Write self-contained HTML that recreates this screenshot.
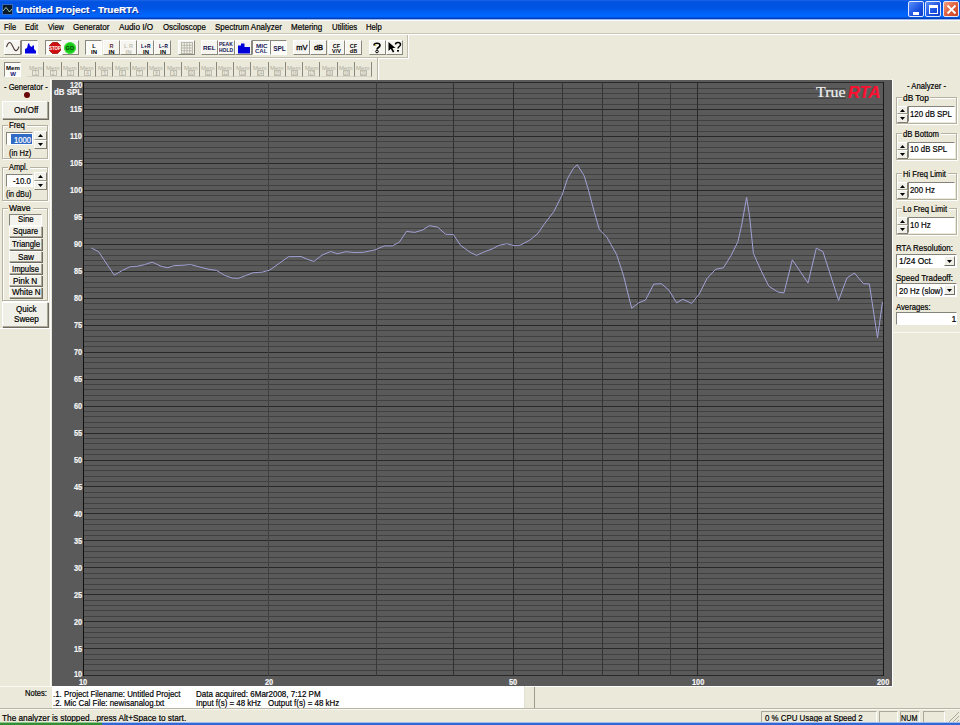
<!DOCTYPE html><html><head><meta charset="utf-8"><style>
*{margin:0;padding:0;box-sizing:border-box}
html,body{width:960px;height:725px;overflow:hidden;background:#ebe9da;font-family:"Liberation Sans",sans-serif;font-size:8.5px;color:#000}
.ab{position:absolute}
.t{position:absolute;white-space:nowrap;line-height:1;-webkit-text-stroke:0.2px currentColor}
.btn{position:absolute;background:#f1f0e8;border-top:1px solid #fff;border-left:1px solid #fff;border-right:1px solid #aca899;border-bottom:1px solid #aca899;box-shadow:1px 1px 0 #6f6d62}
.tb{position:absolute;background:#f6f5f0;border-top:1px solid #fff;border-left:1px solid #fff;border-right:1px solid #8a887c;border-bottom:1px solid #8a887c}
.tbp{position:absolute;background:#fbfbf8;border-top:1px solid #8a887c;border-left:1px solid #8a887c;border-right:1px solid #fff;border-bottom:1px solid #fff}
.grp{position:absolute;border:1px solid #b4b1a0;box-shadow:inset 1px 1px 0 #fff,1px 1px 0 #fff}
.sunk{position:absolute;background:#fff;border-top:1px solid #85837a;border-left:1px solid #85837a;border-right:1px solid #fff;border-bottom:1px solid #fff}

</style></head><body>
<div class="ab" style="left:0;top:0;width:960px;height:19px;background:linear-gradient(#1a64ea 0px,#0052e0 2px,#0054e4 8px,#0062f8 13px,#0066ff 16.5px,#0040b8 18.5px)"></div>
<div class="ab" style="left:2px;top:4px;width:11px;height:11px;background:#0a1a2a;border:1px solid #3a6ab8"></div>
<svg class="ab" style="left:2px;top:4px" width="11" height="11"><polyline points="1,7 4,3.5 7.5,8 10,5" fill="none" stroke="#a0c8a8" stroke-width="1"/></svg>
<div class="t" style="left:16.40px;top:5.00px;font-size:9.8px;font-weight:bold;color:#fff;transform:scaleX(1.0112);transform-origin:0 0;text-shadow:1px 1px 0 #0a2a90">Untitled Project - TrueRTA</div>
<div class="ab" style="left:908px;top:1px;width:16px;height:16px;border:1px solid #dfe8ff;border-radius:2px;background:linear-gradient(135deg,#5a8ef8,#1a50e0 60%,#1040c8)"><div class="ab" style="left:4px;top:10px;width:6px;height:3px;background:#fff"></div></div>
<div class="ab" style="left:925px;top:1px;width:16px;height:16px;border:1px solid #dfe8ff;border-radius:2px;background:linear-gradient(135deg,#5a8ef8,#1a50e0 60%,#1040c8)"><div class="ab" style="left:3px;top:3px;width:9px;height:9px;border:1px solid #fff;border-top-width:3px"></div></div>
<div class="ab" style="left:943px;top:1px;width:16px;height:16px;border:1px solid #dfe8ff;border-radius:2px;background:linear-gradient(135deg,#f0a080,#e06040 50%,#c84020)"><svg class="ab" style="left:2px;top:2px" width="11" height="11"><path d="M1.5 1.5L9.5 9.5M9.5 1.5L1.5 9.5" stroke="#fff" stroke-width="1.8"/></svg></div>
<div class="ab" style="left:0;top:19px;width:960px;height:1px;background:#9ab4ec"></div>
<div class="ab" style="left:0;top:20px;width:960px;height:1px;background:#fbfbff"></div>
<div class="t" style="left:4.20px;top:23.00px;font-size:8.8px;transform:scaleX(0.8498);transform-origin:0 0">File</div>
<div class="t" style="left:25.00px;top:23.00px;font-size:8.8px;transform:scaleX(0.8573);transform-origin:0 0">Edit</div>
<div class="t" style="left:48.00px;top:23.00px;font-size:8.8px;transform:scaleX(0.8459);transform-origin:0 0">View</div>
<div class="t" style="left:73.00px;top:23.00px;font-size:8.8px;transform:scaleX(0.9187);transform-origin:0 0">Generator</div>
<div class="t" style="left:118.75px;top:23.00px;font-size:8.8px;transform:scaleX(0.9336);transform-origin:0 0">Audio I/O</div>
<div class="t" style="left:162.80px;top:23.00px;font-size:8.8px;transform:scaleX(0.8929);transform-origin:0 0">Osciloscope</div>
<div class="t" style="left:214.60px;top:23.00px;font-size:8.8px;transform:scaleX(0.9058);transform-origin:0 0">Spectrum Analyzer</div>
<div class="t" style="left:291.40px;top:23.00px;font-size:8.8px;transform:scaleX(0.9142);transform-origin:0 0">Metering</div>
<div class="t" style="left:331.80px;top:23.00px;font-size:8.8px;transform:scaleX(0.8886);transform-origin:0 0">Utilities</div>
<div class="t" style="left:366.00px;top:23.00px;font-size:8.8px;transform:scaleX(0.8730);transform-origin:0 0">Help</div>
<div class="ab" style="left:0;top:33px;width:960px;height:1px;background:#c8c5b4"></div>
<div class="ab" style="left:0;top:34px;width:960px;height:1px;background:#fff"></div>
<div class="ab" style="left:0;top:57px;width:408px;height:1px;background:#c0bdac"></div>
<div class="ab" style="left:0;top:58px;width:409px;height:1px;background:#fff"></div>
<div class="tb" style="left:4px;top:40px;width:17px;height:15px;overflow:hidden"></div>
<svg class="ab" style="left:5px;top:41px" width="16" height="12"><path d="M1.5 6 C3 1, 5 0.5, 6.5 3 S9.5 10.5, 11.5 9.5 S13.5 6.5, 14 5.5" fill="none" stroke="#4a3a3a" stroke-width="1.1"/></svg>
<div class="tbp" style="left:21px;top:40px;width:17px;height:15px;overflow:hidden"></div>
<svg class="ab" style="left:24px;top:41px" width="13" height="13"><path d="M1 12.5 L1 8 L3 7 L4 3 L5 2 L6 5 L8 6 L9 4 L10 5 L10 8 L12 10 L12 12.5Z" fill="#0000e0"/></svg>
<div class="tbp" style="left:45px;top:40px;width:17px;height:15px;overflow:hidden"></div>
<svg class="ab" style="left:49px;top:42px" width="12" height="12"><path d="M3.5 0.5 L8.5 0.5 L11.5 3.5 L11.5 8.5 L8.5 11.5 L3.5 11.5 L0.5 8.5 L0.5 3.5Z" fill="#d01010" stroke="#901010" stroke-width="0.8"/></svg>
<div class="t" style="left:48.91px;top:47.00px;font-size:4.5px;font-weight:bold;color:#fff;-webkit-text-stroke:0">STOP</div>
<div class="tb" style="left:62px;top:40px;width:17px;height:15px;overflow:hidden"></div>
<div class="ab" style="left:63.5px;top:41.5px;width:12.5px;height:12px;border-radius:50%;background:#18c818;border:1px solid #40e040"></div>
<div class="t" style="left:65.52px;top:46.00px;font-size:5.5px;font-weight:bold;color:#0a3a0a;-webkit-text-stroke:0">GO</div>
<div class="tbp" style="left:85px;top:40px;width:17px;height:15px;overflow:hidden"></div>
<div class="t" style="left:92.32px;top:44.00px;font-size:5.5px;font-weight:bold;color:#000;-webkit-text-stroke:0">L</div>
<div class="t" style="left:91.00px;top:49.00px;font-size:6px;font-weight:bold;color:#000;-webkit-text-stroke:0">IN</div>
<div class="tb" style="left:103px;top:40px;width:17px;height:15px;overflow:hidden"></div>
<div class="t" style="left:109.51px;top:44.00px;font-size:5.5px;font-weight:bold;color:#603030;-webkit-text-stroke:0">R</div>
<div class="t" style="left:108.50px;top:49.00px;font-size:6px;font-weight:bold;color:#000;-webkit-text-stroke:0">IN</div>
<div class="tb" style="left:120px;top:40px;width:17px;height:15px;overflow:hidden"></div>
<div class="t" style="left:124.12px;top:44.00px;font-size:5.5px;font-weight:bold;color:#c4c2b4;-webkit-text-stroke:0">L R</div>
<div class="t" style="left:125.50px;top:49.00px;font-size:6px;font-weight:bold;color:#c4c2b4;-webkit-text-stroke:0">IN</div>
<div class="tb" style="left:137px;top:40px;width:17px;height:15px;overflow:hidden"></div>
<div class="t" style="left:141.26px;top:44.00px;font-size:5.5px;font-weight:bold;color:#000040;transform:scaleX(0.9000);transform-origin:0 0;-webkit-text-stroke:0">L+R</div>
<div class="t" style="left:143.00px;top:49.00px;font-size:6px;font-weight:bold;color:#000;-webkit-text-stroke:0">IN</div>
<div class="tb" style="left:154px;top:40px;width:17px;height:15px;overflow:hidden"></div>
<div class="t" style="left:158.58px;top:44.00px;font-size:5.5px;font-weight:bold;color:#000040;transform:scaleX(0.8500);transform-origin:0 0;-webkit-text-stroke:0">L–R</div>
<div class="t" style="left:160.00px;top:49.00px;font-size:6px;font-weight:bold;color:#000;-webkit-text-stroke:0">IN</div>
<div class="tb" style="left:178px;top:40px;width:17px;height:15px;overflow:hidden"></div>
<svg class="ab" style="left:181px;top:41.5px" width="12" height="12"><rect x="0.00" y="0" width="1" height="12" fill="#b8b6a8"/><rect x="2.75" y="0" width="1" height="12" fill="#b8b6a8"/><rect x="5.50" y="0" width="1" height="12" fill="#b8b6a8"/><rect x="8.25" y="0" width="1" height="12" fill="#b8b6a8"/><rect x="11.00" y="0" width="1" height="12" fill="#b8b6a8"/><rect x="0" y="0.00" width="12" height="1" fill="#b8b6a8"/><rect x="0" y="2.75" width="12" height="1" fill="#b8b6a8"/><rect x="0" y="5.50" width="12" height="1" fill="#b8b6a8"/><rect x="0" y="8.25" width="12" height="1" fill="#b8b6a8"/><rect x="0" y="11.00" width="12" height="1" fill="#b8b6a8"/></svg>
<div class="tb" style="left:201px;top:40px;width:17px;height:15px;overflow:hidden"></div>
<div class="t" style="left:203.20px;top:45.00px;font-size:6px;font-weight:bold;color:#101050;transform:scaleX(1.0500);transform-origin:0 0;-webkit-text-stroke:0">REL</div>
<div class="tb" style="left:218px;top:40px;width:17px;height:15px;overflow:hidden"></div>
<div class="t" style="left:219.12px;top:43.00px;font-size:4.5px;font-weight:bold;color:#101050;transform:scaleX(1.1000);transform-origin:0 0;-webkit-text-stroke:0">PEAK</div>
<div class="t" style="left:218.99px;top:49.00px;font-size:4.5px;font-weight:bold;color:#101050;transform:scaleX(1.1000);transform-origin:0 0;-webkit-text-stroke:0">HOLD</div>
<div class="tb" style="left:235px;top:40px;width:17px;height:15px;overflow:hidden"></div>
<svg class="ab" style="left:238px;top:43px" width="13" height="11"><path d="M0 10.5 L0 2.5 L3 2.5 L3 0.5 L6.5 0.5 L6.5 4 L12 4 L12 10.5Z" fill="#0000d8"/></svg>
<div class="tbp" style="left:252px;top:40px;width:18px;height:15px;overflow:hidden"></div>
<div class="t" style="left:255.70px;top:44.00px;font-size:5.5px;font-weight:bold;color:#202060;transform:scaleX(1.1500);transform-origin:0 0;-webkit-text-stroke:0">MIC</div>
<div class="t" style="left:255.28px;top:49.00px;font-size:5.5px;font-weight:bold;color:#303070;transform:scaleX(1.1000);transform-origin:0 0;-webkit-text-stroke:0">CAL</div>
<div class="tbp" style="left:270px;top:40px;width:17px;height:15px;overflow:hidden"></div>
<div class="t" style="left:273.18px;top:46.00px;font-size:6.5px;font-weight:bold;color:#202050;-webkit-text-stroke:0">SPL</div>
<div class="tb" style="left:293px;top:40px;width:17px;height:15px;overflow:hidden"></div>
<div class="t" style="left:296.37px;top:44.00px;font-size:7.5px;color:#000;-webkit-text-stroke:0.3px #000">mV</div>
<div class="tb" style="left:310px;top:40px;width:17px;height:15px;overflow:hidden"></div>
<div class="t" style="left:313.91px;top:44.00px;font-size:7.5px;color:#000;-webkit-text-stroke:0.3px #000">dB</div>
<div class="tb" style="left:328px;top:40px;width:17px;height:15px;overflow:hidden"></div>
<div class="t" style="left:332.83px;top:44.00px;font-size:5.5px;font-weight:bold;color:#000;-webkit-text-stroke:0">CF</div>
<div class="t" style="left:332.07px;top:49.00px;font-size:5.5px;font-weight:bold;color:#000;-webkit-text-stroke:0">V/V</div>
<div class="tb" style="left:345px;top:40px;width:17px;height:15px;overflow:hidden"></div>
<div class="t" style="left:349.83px;top:44.00px;font-size:5.5px;font-weight:bold;color:#000;-webkit-text-stroke:0">CF</div>
<div class="t" style="left:349.83px;top:49.00px;font-size:5.5px;font-weight:bold;color:#000;-webkit-text-stroke:0">dB</div>
<div class="tb" style="left:369px;top:40px;width:17px;height:15px;overflow:hidden"></div>
<svg class="ab" style="left:371px;top:41px" width="12" height="13"><path d="M3 4.5 C3 1.5, 9 1.5, 9 4.5 C9 6.5, 6 6.5, 6 8.5" fill="none" stroke="#000" stroke-width="1.6"/><circle cx="6" cy="10.5" r="1.3" fill="none" stroke="#000" stroke-width="1"/><circle cx="4.5" cy="4" r="0.9" fill="#c8b040"/></svg>
<div class="tb" style="left:386px;top:40px;width:17px;height:15px;overflow:hidden"></div>
<svg class="ab" style="left:387px;top:41px" width="15" height="13"><path d="M1.5 1 L1.5 10 L3.8 7.8 L5.8 11.5 L7.3 10.7 L5.4 7 L8.5 7Z" fill="#000"/><path d="M8.5 3.5 C8.5 0.8, 13.5 0.8, 13.5 3.5 C13.5 5.5, 11 5.5, 11 7.5" fill="none" stroke="#000" stroke-width="1.5"/><rect x="10" y="9" width="2" height="1.6" fill="#000"/></svg>
<div class="ab" style="left:407px;top:35px;width:2px;height:23px;border-left:1px solid #c0bdac;border-right:1px solid #fff"></div>
<div class="tbp" style="left:4px;top:62px;width:17px;height:15px"></div>
<div class="t" style="left:6.11px;top:66.00px;font-size:5.5px;font-weight:bold;color:#000;transform:scaleX(1.1000);transform-origin:0 0;-webkit-text-stroke:0">Mem</div>
<div class="t" style="left:10.17px;top:71.00px;font-size:6px;font-weight:bold;color:#101070;-webkit-text-stroke:0">W</div>
<div class="ab" style="left:27.3px;top:62px;width:17px;height:15px;border-right:1px solid #8a887c;border-bottom:1px solid #d8d6c8"></div>
<div class="t" style="left:28.58px;top:66.00px;font-size:5.5px;color:#aeac9e;transform:scaleX(1.1000);transform-origin:0 0;-webkit-text-stroke:0">Mem</div>
<div class="ab" style="left:32.3px;top:70px;width:7px;height:6px;border:1px solid #bebcae"></div>
<div class="t" style="left:34.55px;top:72.00px;font-size:4.5px;color:#aeac9e;-webkit-text-stroke:0">1</div>
<div class="ab" style="left:44.5px;top:62px;width:17px;height:15px;border-right:1px solid #8a887c;border-bottom:1px solid #d8d6c8"></div>
<div class="t" style="left:45.83px;top:66.00px;font-size:5.5px;color:#aeac9e;transform:scaleX(1.1000);transform-origin:0 0;-webkit-text-stroke:0">Mem</div>
<div class="ab" style="left:49.5px;top:70px;width:7px;height:6px;border:1px solid #bebcae"></div>
<div class="t" style="left:51.80px;top:72.00px;font-size:4.5px;color:#aeac9e;-webkit-text-stroke:0">2</div>
<div class="ab" style="left:61.8px;top:62px;width:17px;height:15px;border-right:1px solid #8a887c;border-bottom:1px solid #d8d6c8"></div>
<div class="t" style="left:63.08px;top:66.00px;font-size:5.5px;color:#aeac9e;transform:scaleX(1.1000);transform-origin:0 0;-webkit-text-stroke:0">Mem</div>
<div class="ab" style="left:66.8px;top:70px;width:7px;height:6px;border:1px solid #bebcae"></div>
<div class="t" style="left:69.05px;top:72.00px;font-size:4.5px;color:#aeac9e;-webkit-text-stroke:0">3</div>
<div class="ab" style="left:79.0px;top:62px;width:17px;height:15px;border-right:1px solid #8a887c;border-bottom:1px solid #d8d6c8"></div>
<div class="t" style="left:80.33px;top:66.00px;font-size:5.5px;color:#aeac9e;transform:scaleX(1.1000);transform-origin:0 0;-webkit-text-stroke:0">Mem</div>
<div class="ab" style="left:84.0px;top:70px;width:7px;height:6px;border:1px solid #bebcae"></div>
<div class="t" style="left:86.30px;top:72.00px;font-size:4.5px;color:#aeac9e;-webkit-text-stroke:0">4</div>
<div class="ab" style="left:96.3px;top:62px;width:17px;height:15px;border-right:1px solid #8a887c;border-bottom:1px solid #d8d6c8"></div>
<div class="t" style="left:97.58px;top:66.00px;font-size:5.5px;color:#aeac9e;transform:scaleX(1.1000);transform-origin:0 0;-webkit-text-stroke:0">Mem</div>
<div class="ab" style="left:101.3px;top:70px;width:7px;height:6px;border:1px solid #bebcae"></div>
<div class="t" style="left:103.55px;top:72.00px;font-size:4.5px;color:#aeac9e;-webkit-text-stroke:0">5</div>
<div class="ab" style="left:113.5px;top:62px;width:17px;height:15px;border-right:1px solid #8a887c;border-bottom:1px solid #d8d6c8"></div>
<div class="t" style="left:114.83px;top:66.00px;font-size:5.5px;color:#aeac9e;transform:scaleX(1.1000);transform-origin:0 0;-webkit-text-stroke:0">Mem</div>
<div class="ab" style="left:118.5px;top:70px;width:7px;height:6px;border:1px solid #bebcae"></div>
<div class="t" style="left:120.80px;top:72.00px;font-size:4.5px;color:#aeac9e;-webkit-text-stroke:0">6</div>
<div class="ab" style="left:130.8px;top:62px;width:17px;height:15px;border-right:1px solid #8a887c;border-bottom:1px solid #d8d6c8"></div>
<div class="t" style="left:132.08px;top:66.00px;font-size:5.5px;color:#aeac9e;transform:scaleX(1.1000);transform-origin:0 0;-webkit-text-stroke:0">Mem</div>
<div class="ab" style="left:135.8px;top:70px;width:7px;height:6px;border:1px solid #bebcae"></div>
<div class="t" style="left:138.05px;top:72.00px;font-size:4.5px;color:#aeac9e;-webkit-text-stroke:0">7</div>
<div class="ab" style="left:148.1px;top:62px;width:17px;height:15px;border-right:1px solid #8a887c;border-bottom:1px solid #d8d6c8"></div>
<div class="t" style="left:149.33px;top:66.00px;font-size:5.5px;color:#aeac9e;transform:scaleX(1.1000);transform-origin:0 0;-webkit-text-stroke:0">Mem</div>
<div class="ab" style="left:153.1px;top:70px;width:7px;height:6px;border:1px solid #bebcae"></div>
<div class="t" style="left:155.30px;top:72.00px;font-size:4.5px;color:#aeac9e;-webkit-text-stroke:0">8</div>
<div class="ab" style="left:165.3px;top:62px;width:17px;height:15px;border-right:1px solid #8a887c;border-bottom:1px solid #d8d6c8"></div>
<div class="t" style="left:166.58px;top:66.00px;font-size:5.5px;color:#aeac9e;transform:scaleX(1.1000);transform-origin:0 0;-webkit-text-stroke:0">Mem</div>
<div class="ab" style="left:170.3px;top:70px;width:7px;height:6px;border:1px solid #bebcae"></div>
<div class="t" style="left:172.55px;top:72.00px;font-size:4.5px;color:#aeac9e;-webkit-text-stroke:0">9</div>
<div class="ab" style="left:182.6px;top:62px;width:17px;height:15px;border-right:1px solid #8a887c;border-bottom:1px solid #d8d6c8"></div>
<div class="t" style="left:183.83px;top:66.00px;font-size:5.5px;color:#aeac9e;transform:scaleX(1.1000);transform-origin:0 0;-webkit-text-stroke:0">Mem</div>
<div class="ab" style="left:187.6px;top:70px;width:7px;height:6px;border:1px solid #bebcae"></div>
<div class="t" style="left:188.55px;top:72.00px;font-size:4.5px;color:#aeac9e;-webkit-text-stroke:0">10</div>
<div class="ab" style="left:199.8px;top:62px;width:17px;height:15px;border-right:1px solid #8a887c;border-bottom:1px solid #d8d6c8"></div>
<div class="t" style="left:201.08px;top:66.00px;font-size:5.5px;color:#aeac9e;transform:scaleX(1.1000);transform-origin:0 0;-webkit-text-stroke:0">Mem</div>
<div class="ab" style="left:204.8px;top:70px;width:7px;height:6px;border:1px solid #bebcae"></div>
<div class="t" style="left:205.96px;top:72.00px;font-size:4.5px;color:#aeac9e;-webkit-text-stroke:0">11</div>
<div class="ab" style="left:217.1px;top:62px;width:17px;height:15px;border-right:1px solid #8a887c;border-bottom:1px solid #d8d6c8"></div>
<div class="t" style="left:218.33px;top:66.00px;font-size:5.5px;color:#aeac9e;transform:scaleX(1.1000);transform-origin:0 0;-webkit-text-stroke:0">Mem</div>
<div class="ab" style="left:222.1px;top:70px;width:7px;height:6px;border:1px solid #bebcae"></div>
<div class="t" style="left:223.05px;top:72.00px;font-size:4.5px;color:#aeac9e;-webkit-text-stroke:0">12</div>
<div class="ab" style="left:234.3px;top:62px;width:17px;height:15px;border-right:1px solid #8a887c;border-bottom:1px solid #d8d6c8"></div>
<div class="t" style="left:235.58px;top:66.00px;font-size:5.5px;color:#aeac9e;transform:scaleX(1.1000);transform-origin:0 0;-webkit-text-stroke:0">Mem</div>
<div class="ab" style="left:239.3px;top:70px;width:7px;height:6px;border:1px solid #bebcae"></div>
<div class="t" style="left:240.30px;top:72.00px;font-size:4.5px;color:#aeac9e;-webkit-text-stroke:0">13</div>
<div class="ab" style="left:251.6px;top:62px;width:17px;height:15px;border-right:1px solid #8a887c;border-bottom:1px solid #d8d6c8"></div>
<div class="t" style="left:252.83px;top:66.00px;font-size:5.5px;color:#aeac9e;transform:scaleX(1.1000);transform-origin:0 0;-webkit-text-stroke:0">Mem</div>
<div class="ab" style="left:256.6px;top:70px;width:7px;height:6px;border:1px solid #bebcae"></div>
<div class="t" style="left:257.55px;top:72.00px;font-size:4.5px;color:#aeac9e;-webkit-text-stroke:0">14</div>
<div class="ab" style="left:268.8px;top:62px;width:17px;height:15px;border-right:1px solid #8a887c;border-bottom:1px solid #d8d6c8"></div>
<div class="t" style="left:270.08px;top:66.00px;font-size:5.5px;color:#aeac9e;transform:scaleX(1.1000);transform-origin:0 0;-webkit-text-stroke:0">Mem</div>
<div class="ab" style="left:273.8px;top:70px;width:7px;height:6px;border:1px solid #bebcae"></div>
<div class="t" style="left:274.80px;top:72.00px;font-size:4.5px;color:#aeac9e;-webkit-text-stroke:0">15</div>
<div class="ab" style="left:286.1px;top:62px;width:17px;height:15px;border-right:1px solid #8a887c;border-bottom:1px solid #d8d6c8"></div>
<div class="t" style="left:287.33px;top:66.00px;font-size:5.5px;color:#aeac9e;transform:scaleX(1.1000);transform-origin:0 0;-webkit-text-stroke:0">Mem</div>
<div class="ab" style="left:291.1px;top:70px;width:7px;height:6px;border:1px solid #bebcae"></div>
<div class="t" style="left:292.05px;top:72.00px;font-size:4.5px;color:#aeac9e;-webkit-text-stroke:0">16</div>
<div class="ab" style="left:303.3px;top:62px;width:17px;height:15px;border-right:1px solid #8a887c;border-bottom:1px solid #d8d6c8"></div>
<div class="t" style="left:304.58px;top:66.00px;font-size:5.5px;color:#aeac9e;transform:scaleX(1.1000);transform-origin:0 0;-webkit-text-stroke:0">Mem</div>
<div class="ab" style="left:308.3px;top:70px;width:7px;height:6px;border:1px solid #bebcae"></div>
<div class="t" style="left:309.30px;top:72.00px;font-size:4.5px;color:#aeac9e;-webkit-text-stroke:0">17</div>
<div class="ab" style="left:320.6px;top:62px;width:17px;height:15px;border-right:1px solid #8a887c;border-bottom:1px solid #d8d6c8"></div>
<div class="t" style="left:321.83px;top:66.00px;font-size:5.5px;color:#aeac9e;transform:scaleX(1.1000);transform-origin:0 0;-webkit-text-stroke:0">Mem</div>
<div class="ab" style="left:325.6px;top:70px;width:7px;height:6px;border:1px solid #bebcae"></div>
<div class="t" style="left:326.55px;top:72.00px;font-size:4.5px;color:#aeac9e;-webkit-text-stroke:0">18</div>
<div class="ab" style="left:337.8px;top:62px;width:17px;height:15px;border-right:1px solid #8a887c;border-bottom:1px solid #d8d6c8"></div>
<div class="t" style="left:339.08px;top:66.00px;font-size:5.5px;color:#aeac9e;transform:scaleX(1.1000);transform-origin:0 0;-webkit-text-stroke:0">Mem</div>
<div class="ab" style="left:342.8px;top:70px;width:7px;height:6px;border:1px solid #bebcae"></div>
<div class="t" style="left:343.80px;top:72.00px;font-size:4.5px;color:#aeac9e;-webkit-text-stroke:0">19</div>
<div class="ab" style="left:355.1px;top:62px;width:17px;height:15px;border-right:1px solid #8a887c;border-bottom:1px solid #d8d6c8"></div>
<div class="t" style="left:356.33px;top:66.00px;font-size:5.5px;color:#aeac9e;transform:scaleX(1.1000);transform-origin:0 0;-webkit-text-stroke:0">Mem</div>
<div class="ab" style="left:360.1px;top:70px;width:7px;height:6px;border:1px solid #bebcae"></div>
<div class="t" style="left:361.05px;top:72.00px;font-size:4.5px;color:#aeac9e;-webkit-text-stroke:0">20</div>
<div class="ab" style="left:377px;top:58px;width:2px;height:22px;border-left:1px solid #b8b5a4;border-right:1px solid #fff"></div>
<div class="ab" style="left:52px;top:80px;width:840px;height:606px;background:#5a5a5a"></div>
<svg class="ab" style="left:0;top:0" width="960" height="725" shape-rendering="crispEdges"><rect x="84" y="675" width="800" height="1" fill="#282828"/><rect x="84" y="670" width="800" height="1" fill="#414141"/><rect x="84" y="664" width="800" height="1" fill="#414141"/><rect x="84" y="659" width="800" height="1" fill="#414141"/><rect x="84" y="654" width="800" height="1" fill="#414141"/><rect x="84" y="648" width="800" height="1" fill="#282828"/><rect x="84" y="643" width="800" height="1" fill="#414141"/><rect x="84" y="637" width="800" height="1" fill="#414141"/><rect x="84" y="632" width="800" height="1" fill="#414141"/><rect x="84" y="627" width="800" height="1" fill="#414141"/><rect x="84" y="621" width="800" height="1" fill="#282828"/><rect x="84" y="616" width="800" height="1" fill="#414141"/><rect x="84" y="610" width="800" height="1" fill="#414141"/><rect x="84" y="605" width="800" height="1" fill="#414141"/><rect x="84" y="600" width="800" height="1" fill="#414141"/><rect x="84" y="594" width="800" height="1" fill="#282828"/><rect x="84" y="589" width="800" height="1" fill="#414141"/><rect x="84" y="584" width="800" height="1" fill="#414141"/><rect x="84" y="578" width="800" height="1" fill="#414141"/><rect x="84" y="573" width="800" height="1" fill="#414141"/><rect x="84" y="567" width="800" height="1" fill="#282828"/><rect x="84" y="562" width="800" height="1" fill="#414141"/><rect x="84" y="557" width="800" height="1" fill="#414141"/><rect x="84" y="551" width="800" height="1" fill="#414141"/><rect x="84" y="546" width="800" height="1" fill="#414141"/><rect x="84" y="540" width="800" height="1" fill="#282828"/><rect x="84" y="535" width="800" height="1" fill="#414141"/><rect x="84" y="530" width="800" height="1" fill="#414141"/><rect x="84" y="524" width="800" height="1" fill="#414141"/><rect x="84" y="519" width="800" height="1" fill="#414141"/><rect x="84" y="513" width="800" height="1" fill="#282828"/><rect x="84" y="508" width="800" height="1" fill="#414141"/><rect x="84" y="503" width="800" height="1" fill="#414141"/><rect x="84" y="497" width="800" height="1" fill="#414141"/><rect x="84" y="492" width="800" height="1" fill="#414141"/><rect x="84" y="486" width="800" height="1" fill="#282828"/><rect x="84" y="481" width="800" height="1" fill="#414141"/><rect x="84" y="476" width="800" height="1" fill="#414141"/><rect x="84" y="470" width="800" height="1" fill="#414141"/><rect x="84" y="465" width="800" height="1" fill="#414141"/><rect x="84" y="460" width="800" height="1" fill="#282828"/><rect x="84" y="454" width="800" height="1" fill="#414141"/><rect x="84" y="449" width="800" height="1" fill="#414141"/><rect x="84" y="443" width="800" height="1" fill="#414141"/><rect x="84" y="438" width="800" height="1" fill="#414141"/><rect x="84" y="433" width="800" height="1" fill="#282828"/><rect x="84" y="427" width="800" height="1" fill="#414141"/><rect x="84" y="422" width="800" height="1" fill="#414141"/><rect x="84" y="416" width="800" height="1" fill="#414141"/><rect x="84" y="411" width="800" height="1" fill="#414141"/><rect x="84" y="406" width="800" height="1" fill="#282828"/><rect x="84" y="400" width="800" height="1" fill="#414141"/><rect x="84" y="395" width="800" height="1" fill="#414141"/><rect x="84" y="389" width="800" height="1" fill="#414141"/><rect x="84" y="384" width="800" height="1" fill="#414141"/><rect x="84" y="379" width="800" height="1" fill="#282828"/><rect x="84" y="373" width="800" height="1" fill="#414141"/><rect x="84" y="368" width="800" height="1" fill="#414141"/><rect x="84" y="362" width="800" height="1" fill="#414141"/><rect x="84" y="357" width="800" height="1" fill="#414141"/><rect x="84" y="352" width="800" height="1" fill="#282828"/><rect x="84" y="346" width="800" height="1" fill="#414141"/><rect x="84" y="341" width="800" height="1" fill="#414141"/><rect x="84" y="336" width="800" height="1" fill="#414141"/><rect x="84" y="330" width="800" height="1" fill="#414141"/><rect x="84" y="325" width="800" height="1" fill="#282828"/><rect x="84" y="319" width="800" height="1" fill="#414141"/><rect x="84" y="314" width="800" height="1" fill="#414141"/><rect x="84" y="309" width="800" height="1" fill="#414141"/><rect x="84" y="303" width="800" height="1" fill="#414141"/><rect x="84" y="298" width="800" height="1" fill="#282828"/><rect x="84" y="292" width="800" height="1" fill="#414141"/><rect x="84" y="287" width="800" height="1" fill="#414141"/><rect x="84" y="282" width="800" height="1" fill="#414141"/><rect x="84" y="276" width="800" height="1" fill="#414141"/><rect x="84" y="271" width="800" height="1" fill="#282828"/><rect x="84" y="265" width="800" height="1" fill="#414141"/><rect x="84" y="260" width="800" height="1" fill="#414141"/><rect x="84" y="255" width="800" height="1" fill="#414141"/><rect x="84" y="249" width="800" height="1" fill="#414141"/><rect x="84" y="244" width="800" height="1" fill="#282828"/><rect x="84" y="238" width="800" height="1" fill="#414141"/><rect x="84" y="233" width="800" height="1" fill="#414141"/><rect x="84" y="228" width="800" height="1" fill="#414141"/><rect x="84" y="222" width="800" height="1" fill="#414141"/><rect x="84" y="217" width="800" height="1" fill="#282828"/><rect x="84" y="212" width="800" height="1" fill="#414141"/><rect x="84" y="206" width="800" height="1" fill="#414141"/><rect x="84" y="201" width="800" height="1" fill="#414141"/><rect x="84" y="195" width="800" height="1" fill="#414141"/><rect x="84" y="190" width="800" height="1" fill="#282828"/><rect x="84" y="185" width="800" height="1" fill="#414141"/><rect x="84" y="179" width="800" height="1" fill="#414141"/><rect x="84" y="174" width="800" height="1" fill="#414141"/><rect x="84" y="168" width="800" height="1" fill="#414141"/><rect x="84" y="163" width="800" height="1" fill="#282828"/><rect x="84" y="158" width="800" height="1" fill="#414141"/><rect x="84" y="152" width="800" height="1" fill="#414141"/><rect x="84" y="147" width="800" height="1" fill="#414141"/><rect x="84" y="141" width="800" height="1" fill="#414141"/><rect x="84" y="136" width="800" height="1" fill="#282828"/><rect x="84" y="131" width="800" height="1" fill="#414141"/><rect x="84" y="125" width="800" height="1" fill="#414141"/><rect x="84" y="120" width="800" height="1" fill="#414141"/><rect x="84" y="115" width="800" height="1" fill="#414141"/><rect x="84" y="109" width="800" height="1" fill="#282828"/><rect x="84" y="104" width="800" height="1" fill="#414141"/><rect x="84" y="98" width="800" height="1" fill="#414141"/><rect x="84" y="93" width="800" height="1" fill="#414141"/><rect x="84" y="88" width="800" height="1" fill="#414141"/><rect x="84" y="82" width="800" height="1" fill="#282828"/><rect x="268" y="82" width="1" height="594" fill="#404040"/><rect x="376" y="82" width="1" height="594" fill="#383838"/><rect x="453" y="82" width="1" height="594" fill="#303030"/><rect x="513" y="82" width="1" height="594" fill="#2c2c2c"/><rect x="562" y="82" width="1" height="594" fill="#333333"/><rect x="602" y="82" width="1" height="594" fill="#333333"/><rect x="638" y="82" width="1" height="594" fill="#2e2e2e"/><rect x="670" y="82" width="1" height="594" fill="#383838"/><rect x="697" y="82" width="1" height="594" fill="#2a2a2a"/><rect x="883" y="82" width="1" height="594" fill="#1a1a1a"/><rect x="83" y="82" width="1" height="594" fill="#101010"/></svg>
<div class="ab" style="left:846px;top:84px;width:37px;height:18px;background:#5a5a5a"></div>
<div class="t" style="left:815.80px;top:84.00px;font-size:15.5px;font-family:'Liberation Serif',serif;color:#f0f0f0;transform:scaleX(1.0273);transform-origin:0 0">True</div>
<div class="t" style="left:847.60px;top:85.00px;font-size:16px;font-weight:bold;font-style:italic;color:#ff1030;transform:scaleX(1.0316);transform-origin:0 0">RTA</div>
<div class="t" style="left:73.79px;top:646.00px;font-size:8.2px;font-weight:bold;color:#f4f4f4;transform:scaleX(0.9000);transform-origin:0 0">15</div>
<div class="t" style="left:73.79px;top:619.00px;font-size:8.2px;font-weight:bold;color:#f4f4f4;transform:scaleX(0.9000);transform-origin:0 0">20</div>
<div class="t" style="left:73.79px;top:592.00px;font-size:8.2px;font-weight:bold;color:#f4f4f4;transform:scaleX(0.9000);transform-origin:0 0">25</div>
<div class="t" style="left:73.79px;top:565.00px;font-size:8.2px;font-weight:bold;color:#f4f4f4;transform:scaleX(0.9000);transform-origin:0 0">30</div>
<div class="t" style="left:73.79px;top:538.00px;font-size:8.2px;font-weight:bold;color:#f4f4f4;transform:scaleX(0.9000);transform-origin:0 0">35</div>
<div class="t" style="left:73.79px;top:511.00px;font-size:8.2px;font-weight:bold;color:#f4f4f4;transform:scaleX(0.9000);transform-origin:0 0">40</div>
<div class="t" style="left:73.79px;top:484.00px;font-size:8.2px;font-weight:bold;color:#f4f4f4;transform:scaleX(0.9000);transform-origin:0 0">45</div>
<div class="t" style="left:73.79px;top:457.00px;font-size:8.2px;font-weight:bold;color:#f4f4f4;transform:scaleX(0.9000);transform-origin:0 0">50</div>
<div class="t" style="left:73.79px;top:430.00px;font-size:8.2px;font-weight:bold;color:#f4f4f4;transform:scaleX(0.9000);transform-origin:0 0">55</div>
<div class="t" style="left:73.79px;top:403.00px;font-size:8.2px;font-weight:bold;color:#f4f4f4;transform:scaleX(0.9000);transform-origin:0 0">60</div>
<div class="t" style="left:73.79px;top:376.00px;font-size:8.2px;font-weight:bold;color:#f4f4f4;transform:scaleX(0.9000);transform-origin:0 0">65</div>
<div class="t" style="left:73.79px;top:349.00px;font-size:8.2px;font-weight:bold;color:#f4f4f4;transform:scaleX(0.9000);transform-origin:0 0">70</div>
<div class="t" style="left:73.79px;top:322.00px;font-size:8.2px;font-weight:bold;color:#f4f4f4;transform:scaleX(0.9000);transform-origin:0 0">75</div>
<div class="t" style="left:73.79px;top:295.00px;font-size:8.2px;font-weight:bold;color:#f4f4f4;transform:scaleX(0.9000);transform-origin:0 0">80</div>
<div class="t" style="left:73.79px;top:268.00px;font-size:8.2px;font-weight:bold;color:#f4f4f4;transform:scaleX(0.9000);transform-origin:0 0">85</div>
<div class="t" style="left:73.79px;top:241.00px;font-size:8.2px;font-weight:bold;color:#f4f4f4;transform:scaleX(0.9000);transform-origin:0 0">90</div>
<div class="t" style="left:73.79px;top:214.00px;font-size:8.2px;font-weight:bold;color:#f4f4f4;transform:scaleX(0.9000);transform-origin:0 0">95</div>
<div class="t" style="left:69.69px;top:187.00px;font-size:8.2px;font-weight:bold;color:#f4f4f4;transform:scaleX(0.9000);transform-origin:0 0">100</div>
<div class="t" style="left:69.69px;top:160.00px;font-size:8.2px;font-weight:bold;color:#f4f4f4;transform:scaleX(0.9000);transform-origin:0 0">105</div>
<div class="t" style="left:70.09px;top:133.00px;font-size:8.2px;font-weight:bold;color:#f4f4f4;transform:scaleX(0.9000);transform-origin:0 0">110</div>
<div class="t" style="left:70.09px;top:106.00px;font-size:8.2px;font-weight:bold;color:#f4f4f4;transform:scaleX(0.9000);transform-origin:0 0">115</div>
<div class="t" style="left:69.69px;top:82.00px;font-size:8.2px;font-weight:bold;color:#f4f4f4;transform:scaleX(0.9000);transform-origin:0 0">120</div>
<div class="t" style="left:73.79px;top:671.00px;font-size:8.2px;font-weight:bold;color:#f4f4f4;transform:scaleX(0.9000);transform-origin:0 0">10</div>
<div class="t" style="left:53.90px;top:89.00px;font-size:8.2px;font-weight:bold;color:#f4f4f4;transform:scaleX(0.9637);transform-origin:0 0">dB SPL</div>
<div class="t" style="left:79.40px;top:679.00px;font-size:8.2px;font-weight:bold;color:#f4f4f4;transform:scaleX(0.9000);transform-origin:0 0">10</div>
<div class="t" style="left:264.50px;top:679.00px;font-size:8.2px;font-weight:bold;color:#f4f4f4;transform:scaleX(0.9000);transform-origin:0 0">20</div>
<div class="t" style="left:509.19px;top:679.00px;font-size:8.2px;font-weight:bold;color:#f4f4f4;transform:scaleX(0.9000);transform-origin:0 0">50</div>
<div class="t" style="left:692.24px;top:679.00px;font-size:8.2px;font-weight:bold;color:#f4f4f4;transform:scaleX(0.9000);transform-origin:0 0">100</div>
<div class="t" style="left:877.34px;top:679.00px;font-size:8.2px;font-weight:bold;color:#f4f4f4;transform:scaleX(0.9000);transform-origin:0 0">200</div>
<svg class="ab" style="left:0;top:0" width="960" height="725"><polyline points="91.3,248 98.6,251.7 114.2,275.1 122.5,270.4 129.8,266.8 137.1,266.25 144.4,264.7 152.2,262.1 161.1,266.25 167.9,267.8 173.6,265.7 184,265.2 190.4,264.5 200.8,267.3 209.2,269.4 216.5,270.4 224.8,275.4 232.1,278 238.3,278.3 244.6,276 252.9,272.8 262.3,272.1 269.6,270.2 288.5,256.7 301,256.5 307.3,259.3 314,261.4 321.9,255.1 330.7,251.5 337.5,253.75 345.8,251.7 354.2,252.5 363.5,252.3 375,249.9 384.1,245.9 392.4,245.9 399.2,242.3 406.5,231.4 414.8,232.4 423.1,229.8 429.4,225.6 437.7,227.2 445.5,234.2 453.3,234.5 460.6,245.4 470,252.2 476.5,255.4 485.8,251.25 493.1,248.6 498.3,245.5 506.7,243.75 514,245.5 520.2,245.2 529.6,240.3 537.9,233.5 544.2,224.2 553.8,211.6 562.1,195 567.6,178.4 573.1,168.8 577.2,164.7 584.1,175.7 588.3,189.5 593.8,210.2 599.3,229.5 606.9,237.2 616.6,254.5 623.4,275.2 631.7,308.3 638.6,302.8 645.5,300 653.8,284.1 661.4,283.7 669,290.3 676.6,302.8 682.8,299.3 691.7,303.4 699.3,293.9 707,278.5 715.7,269.2 723.4,267.8 731.2,255.3 737.9,241.8 741.8,224.4 746.6,197.4 749.5,215.7 753.4,253.4 761.1,270.7 768.8,286.2 778.2,292.1 784,292.9 792.3,259.8 808,283 816.3,248.2 822.9,251.5 838.6,300.4 846.9,278 854.4,273 863.5,283.8 869.3,283.8 877.5,337.6 882.5,302" fill="none" stroke="#a0a0d4" stroke-width="1" stroke-linejoin="round"/></svg>
<div class="ab" style="left:50px;top:79px;width:1px;height:607px;background:#fff"></div>
<div class="ab" style="left:0;top:328px;width:50px;height:1px;background:#fff"></div>
<div class="ab" style="left:0;top:686px;width:52px;height:1px;background:#fbfaf4"></div>
<div class="ab" style="left:892px;top:79px;width:1px;height:607px;background:#fff"></div>
<div class="ab" style="left:893px;top:332px;width:67px;height:1px;background:#f8f7f0"></div>
<div class="t" style="left:4.30px;top:83.00px;font-size:8.8px;transform:scaleX(0.8675);transform-origin:0 0">- Generator -</div>
<div class="ab" style="left:23.5px;top:91.5px;width:6px;height:6px;border-radius:50%;background:#6a0808"></div>
<div class="btn" style="left:2px;top:101px;width:46px;height:18px"></div>
<div class="t" style="left:13.60px;top:106.00px;font-size:8.8px;transform:scaleX(0.9472);transform-origin:0 0">On/Off</div>
<div class="grp" style="left:2px;top:125px;width:46px;height:34px"></div>
<div class="ab" style="left:8px;top:120px;width:19px;height:9px;background:#ece9d8"></div>
<div class="t" style="left:9.30px;top:121.00px;font-size:8.8px;transform:scaleX(0.8732);transform-origin:0 0">Freq</div>
<div class="sunk" style="left:6px;top:132px;width:27px;height:13px"></div>
<div class="ab" style="left:10.5px;top:134.4px;width:21px;height:9.5px;background:#316ac5"></div>
<div class="t" style="left:14.30px;top:136.00px;font-size:8.8px;color:#fff;transform:scaleX(0.8632);transform-origin:0 0">1000</div>
<div class="btn" style="left:34px;top:131px;width:13px;height:9px;box-shadow:none;border-right-color:#7f7d72;border-bottom-color:#9d9a8a"></div>
<div class="btn" style="left:34px;top:140px;width:13px;height:9px;box-shadow:none;border-right-color:#7f7d72;border-bottom-color:#7f7d72"></div>
<svg class="ab" style="left:38.0px;top:134.0px" width="5" height="3"><path d="M0 3 L2.5 0 L5 3Z" fill="#000"/></svg>
<svg class="ab" style="left:38.0px;top:143.0px" width="5" height="3"><path d="M0 0 L5 0 L2.5 3Z" fill="#000"/></svg>
<div class="t" style="left:9.00px;top:149.00px;font-size:8.8px;transform:scaleX(0.8568);transform-origin:0 0">(in Hz)</div>
<div class="grp" style="left:2px;top:167px;width:46px;height:34px"></div>
<div class="ab" style="left:8px;top:162px;width:22px;height:9px;background:#ece9d8"></div>
<div class="t" style="left:9.30px;top:163.00px;font-size:8.8px;transform:scaleX(0.8313);transform-origin:0 0">Ampl.</div>
<div class="sunk" style="left:6px;top:174px;width:27px;height:13px"></div>
<div class="t" style="left:13.30px;top:177.00px;font-size:8.8px;transform:scaleX(0.8924);transform-origin:0 0">-10.0</div>
<div class="btn" style="left:34px;top:172px;width:13px;height:9px;box-shadow:none;border-right-color:#7f7d72;border-bottom-color:#9d9a8a"></div>
<div class="btn" style="left:34px;top:181px;width:13px;height:9px;box-shadow:none;border-right-color:#7f7d72;border-bottom-color:#7f7d72"></div>
<svg class="ab" style="left:38.0px;top:175.0px" width="5" height="3"><path d="M0 3 L2.5 0 L5 3Z" fill="#000"/></svg>
<svg class="ab" style="left:38.0px;top:184.0px" width="5" height="3"><path d="M0 0 L5 0 L2.5 3Z" fill="#000"/></svg>
<div class="t" style="left:6.10px;top:190.00px;font-size:8.8px;transform:scaleX(0.8243);transform-origin:0 0">(in dBu)</div>
<div class="grp" style="left:2px;top:208px;width:46px;height:93px"></div>
<div class="ab" style="left:8px;top:203px;width:25px;height:9px;background:#ece9d8"></div>
<div class="t" style="left:9.40px;top:204.00px;font-size:8.8px;transform:scaleX(0.9699);transform-origin:0 0">Wave</div>
<div class="ab" style="left:9px;top:214.0px;width:33px;height:12.2px;background:#f4f3ee;border-top:1px solid #85837a;border-left:1px solid #85837a;border-right:1px solid #fff;border-bottom:1px solid #fff"></div>
<div class="t" style="left:18.40px;top:215.00px;font-size:8.8px;transform:scaleX(0.8857);transform-origin:0 0">Sine</div>
<div class="ab" style="left:9px;top:226.2px;width:33px;height:11.2px;background:#f1f0e8;border-top:1px solid #fff;border-left:1px solid #fff;border-right:1px solid #aca899;border-bottom:1px solid #aca899;box-shadow:1px 1px 0 #6f6d62"></div>
<div class="t" style="left:13.00px;top:227.00px;font-size:8.8px;transform:scaleX(0.8845);transform-origin:0 0">Square</div>
<div class="ab" style="left:9px;top:238.4px;width:33px;height:11.2px;background:#f1f0e8;border-top:1px solid #fff;border-left:1px solid #fff;border-right:1px solid #aca899;border-bottom:1px solid #aca899;box-shadow:1px 1px 0 #6f6d62"></div>
<div class="t" style="left:11.70px;top:240.00px;font-size:8.8px;transform:scaleX(0.8962);transform-origin:0 0">Triangle</div>
<div class="ab" style="left:9px;top:250.6px;width:33px;height:11.2px;background:#f1f0e8;border-top:1px solid #fff;border-left:1px solid #fff;border-right:1px solid #aca899;border-bottom:1px solid #aca899;box-shadow:1px 1px 0 #6f6d62"></div>
<div class="t" style="left:17.90px;top:253.00px;font-size:8.8px;transform:scaleX(0.9405);transform-origin:0 0">Saw</div>
<div class="ab" style="left:9px;top:262.8px;width:33px;height:11.2px;background:#f1f0e8;border-top:1px solid #fff;border-left:1px solid #fff;border-right:1px solid #aca899;border-bottom:1px solid #aca899;box-shadow:1px 1px 0 #6f6d62"></div>
<div class="t" style="left:12.20px;top:265.00px;font-size:8.8px;transform:scaleX(0.8762);transform-origin:0 0">Impulse</div>
<div class="ab" style="left:9px;top:275.0px;width:33px;height:11.2px;background:#f1f0e8;border-top:1px solid #fff;border-left:1px solid #fff;border-right:1px solid #aca899;border-bottom:1px solid #aca899;box-shadow:1px 1px 0 #6f6d62"></div>
<div class="t" style="left:13.30px;top:277.00px;font-size:8.8px;transform:scaleX(0.9375);transform-origin:0 0">Pink N</div>
<div class="ab" style="left:9px;top:287.2px;width:33px;height:11.2px;background:#f1f0e8;border-top:1px solid #fff;border-left:1px solid #fff;border-right:1px solid #aca899;border-bottom:1px solid #aca899;box-shadow:1px 1px 0 #6f6d62"></div>
<div class="t" style="left:11.60px;top:288.00px;font-size:8.8px;transform:scaleX(0.9171);transform-origin:0 0">White N</div>
<div class="btn" style="left:2px;top:302px;width:46px;height:25px"></div>
<div class="t" style="left:15.50px;top:305.00px;font-size:8.8px;transform:scaleX(0.9069);transform-origin:0 0">Quick</div>
<div class="t" style="left:13.80px;top:315.00px;font-size:8.8px;transform:scaleX(0.9254);transform-origin:0 0">Sweep</div>
<div class="t" style="left:907.20px;top:82.00px;font-size:8.8px;transform:scaleX(0.8763);transform-origin:0 0">- Analyzer -</div>
<div class="grp" style="left:896px;top:97px;width:61px;height:27px"></div>
<div class="ab" style="left:902px;top:92px;width:28px;height:9px;background:#ece9d8"></div>
<div class="t" style="left:903.00px;top:94.00px;font-size:8.8px;transform:scaleX(0.9472);transform-origin:0 0">dB Top</div>
<div class="btn" style="left:897px;top:106px;width:11px;height:8px;box-shadow:none;border-right-color:#7f7d72;border-bottom-color:#9d9a8a"></div>
<div class="btn" style="left:897px;top:114px;width:11px;height:9px;box-shadow:none;border-right-color:#7f7d72;border-bottom-color:#7f7d72"></div>
<svg class="ab" style="left:900.0px;top:108.5px" width="5" height="3"><path d="M0 3 L2.5 0 L5 3Z" fill="#000"/></svg>
<svg class="ab" style="left:900.0px;top:117.0px" width="5" height="3"><path d="M0 0 L5 0 L2.5 3Z" fill="#000"/></svg>
<div class="sunk" style="left:908px;top:106px;width:47px;height:16px"></div>
<div class="t" style="left:910.20px;top:110.00px;font-size:8.8px;transform:scaleX(0.8942);transform-origin:0 0">120 dB SPL</div>
<div class="grp" style="left:896px;top:133px;width:61px;height:27px"></div>
<div class="ab" style="left:902px;top:128px;width:39px;height:9px;background:#ece9d8"></div>
<div class="t" style="left:903.00px;top:130.00px;font-size:8.8px;transform:scaleX(0.8762);transform-origin:0 0">dB Bottom</div>
<div class="btn" style="left:897px;top:142px;width:11px;height:8px;box-shadow:none;border-right-color:#7f7d72;border-bottom-color:#9d9a8a"></div>
<div class="btn" style="left:897px;top:150px;width:11px;height:9px;box-shadow:none;border-right-color:#7f7d72;border-bottom-color:#7f7d72"></div>
<svg class="ab" style="left:900.0px;top:144.5px" width="5" height="3"><path d="M0 3 L2.5 0 L5 3Z" fill="#000"/></svg>
<svg class="ab" style="left:900.0px;top:153.0px" width="5" height="3"><path d="M0 0 L5 0 L2.5 3Z" fill="#000"/></svg>
<div class="sunk" style="left:908px;top:142px;width:47px;height:16px"></div>
<div class="t" style="left:910.20px;top:145.00px;font-size:8.8px;transform:scaleX(0.8841);transform-origin:0 0">10 dB SPL</div>
<div class="grp" style="left:896px;top:173px;width:61px;height:27px"></div>
<div class="ab" style="left:902px;top:168px;width:46px;height:9px;background:#ece9d8"></div>
<div class="t" style="left:903.00px;top:170.00px;font-size:8.8px;transform:scaleX(0.8621);transform-origin:0 0">Hi Freq Limit</div>
<div class="btn" style="left:897px;top:182px;width:11px;height:8px;box-shadow:none;border-right-color:#7f7d72;border-bottom-color:#9d9a8a"></div>
<div class="btn" style="left:897px;top:190px;width:11px;height:9px;box-shadow:none;border-right-color:#7f7d72;border-bottom-color:#7f7d72"></div>
<svg class="ab" style="left:900.0px;top:184.5px" width="5" height="3"><path d="M0 3 L2.5 0 L5 3Z" fill="#000"/></svg>
<svg class="ab" style="left:900.0px;top:193.0px" width="5" height="3"><path d="M0 0 L5 0 L2.5 3Z" fill="#000"/></svg>
<div class="sunk" style="left:908px;top:182px;width:47px;height:16px"></div>
<div class="t" style="left:910.20px;top:186.00px;font-size:8.8px;transform:scaleX(0.8894);transform-origin:0 0">200 Hz</div>
<div class="grp" style="left:896px;top:208px;width:61px;height:27px"></div>
<div class="ab" style="left:902px;top:203px;width:47px;height:9px;background:#ece9d8"></div>
<div class="t" style="left:903.00px;top:205.00px;font-size:8.8px;transform:scaleX(0.8568);transform-origin:0 0">Lo Freq Limit</div>
<div class="btn" style="left:897px;top:217px;width:11px;height:8px;box-shadow:none;border-right-color:#7f7d72;border-bottom-color:#9d9a8a"></div>
<div class="btn" style="left:897px;top:225px;width:11px;height:9px;box-shadow:none;border-right-color:#7f7d72;border-bottom-color:#7f7d72"></div>
<svg class="ab" style="left:900.0px;top:219.5px" width="5" height="3"><path d="M0 3 L2.5 0 L5 3Z" fill="#000"/></svg>
<svg class="ab" style="left:900.0px;top:228.0px" width="5" height="3"><path d="M0 0 L5 0 L2.5 3Z" fill="#000"/></svg>
<div class="sunk" style="left:908px;top:217px;width:47px;height:16px"></div>
<div class="t" style="left:910.20px;top:221.00px;font-size:8.8px;transform:scaleX(0.9048);transform-origin:0 0">10 Hz</div>
<div class="t" style="left:895.90px;top:244.00px;font-size:8.8px;transform:scaleX(0.9080);transform-origin:0 0">RTA Resolution:</div>
<div class="sunk" style="left:896px;top:254px;width:61px;height:14px"></div>
<div class="t" style="left:898.50px;top:257.00px;font-size:8.8px;transform:scaleX(0.9550);transform-origin:0 0">1/24 Oct.</div>
<div class="btn" style="left:944px;top:256px;width:11px;height:10px;box-shadow:none;border-right-color:#6f6d62;border-bottom-color:#6f6d62"></div>
<svg class="ab" style="left:947px;top:259.5px" width="5" height="3"><path d="M0 0 L5 0 L2.5 3Z" fill="#000"/></svg>
<div class="t" style="left:896.00px;top:274.00px;font-size:8.8px;transform:scaleX(0.9109);transform-origin:0 0">Speed Tradeoff:</div>
<div class="sunk" style="left:896px;top:283px;width:61px;height:14px"></div>
<div class="t" style="left:898.50px;top:287.00px;font-size:8.8px;transform:scaleX(0.8978);transform-origin:0 0">20 Hz (slow)</div>
<div class="btn" style="left:944px;top:285px;width:11px;height:10px;box-shadow:none;border-right-color:#6f6d62;border-bottom-color:#6f6d62"></div>
<svg class="ab" style="left:947px;top:288.5px" width="5" height="3"><path d="M0 0 L5 0 L2.5 3Z" fill="#000"/></svg>
<div class="t" style="left:896.00px;top:303.00px;font-size:8.8px;transform:scaleX(0.8768);transform-origin:0 0">Averages:</div>
<div class="sunk" style="left:896px;top:312px;width:61px;height:13px"></div>
<div class="t" style="left:951.50px;top:315.00px;font-size:8.8px">1</div>
<div class="ab" style="left:52px;top:686px;width:841px;height:1px;background:#fff"></div>
<div class="ab" style="left:52px;top:686px;width:473px;height:22px;background:#fff;border-right:1px solid #e4e2d6"></div>
<div class="ab" style="left:534px;top:687px;width:1px;height:21px;background:#9d9a8a"></div>
<div class="t" style="left:25.00px;top:689.00px;font-size:8.8px;transform:scaleX(0.8611);transform-origin:0 0">Notes:</div>
<div class="t" style="left:52.50px;top:690.00px;font-size:8.8px;transform:scaleX(0.8927);transform-origin:0 0">.1. Project Filename: Untitled Project</div>
<div class="t" style="left:52.50px;top:699.00px;font-size:8.8px;transform:scaleX(0.8991);transform-origin:0 0">.2. Mic Cal File: newisanalog.txt</div>
<div class="t" style="left:195.80px;top:690.00px;font-size:8.8px;transform:scaleX(0.9097);transform-origin:0 0">Data acquired: 6Mar2008, 7:12 PM</div>
<div class="t" style="left:196.00px;top:699.00px;font-size:8.8px;transform:scaleX(0.9010);transform-origin:0 0">Input f(s) = 48 kHz</div>
<div class="t" style="left:267.90px;top:699.00px;font-size:8.8px;transform:scaleX(0.9027);transform-origin:0 0">Output f(s) = 48 kHz</div>
<div class="ab" style="left:0;top:708px;width:960px;height:1px;background:#b8b5a4"></div>
<div class="ab" style="left:0;top:709px;width:960px;height:1px;background:#f8f7f0"></div>
<div class="t" style="left:2.00px;top:714.00px;font-size:8.8px;transform:scaleX(0.9382);transform-origin:0 0">The analyzer is stopped...press Alt+Space to start.</div>
<div class="ab" style="left:761px;top:711px;width:116px;height:12px;border-top:1px solid #aca899;border-left:1px solid #aca899;border-right:1px solid #fff;border-bottom:1px solid #fff"></div>
<div class="t" style="left:764.90px;top:714.00px;font-size:8.8px;transform:scaleX(0.8965);transform-origin:0 0">0 % CPU Usage at Speed 2</div>
<div class="ab" style="left:879px;top:711px;width:19px;height:12px;border-top:1px solid #aca899;border-left:1px solid #aca899;border-right:1px solid #fff;border-bottom:1px solid #fff"></div>
<div class="ab" style="left:900px;top:711px;width:20px;height:12px;border-top:1px solid #aca899;border-left:1px solid #aca899;border-right:1px solid #fff;border-bottom:1px solid #fff"></div>
<div class="t" style="left:901.00px;top:714.00px;font-size:8.8px;transform:scaleX(0.8183);transform-origin:0 0">NUM</div>
<div class="ab" style="left:923px;top:711px;width:22px;height:12px;border-top:1px solid #aca899;border-left:1px solid #aca899;border-right:1px solid #fff;border-bottom:1px solid #fff"></div>
<svg class="ab" style="left:946px;top:710px" width="14" height="13"><path d="M13 2 L2 13 M13 6 L6 13 M13 10 L10 13" stroke="#aca899" stroke-width="1"/></svg>
<div class="ab" style="left:0;top:722px;width:960px;height:3px;background:linear-gradient(#a0bcf0 0,#a0bcf0 1px,#3466d4 1px)"></div>
<div class="ab" style="left:0;top:722px;width:102px;height:3px;background:linear-gradient(#90c890 0,#90c890 1px,#348c34 1px)"></div>
</body></html>
